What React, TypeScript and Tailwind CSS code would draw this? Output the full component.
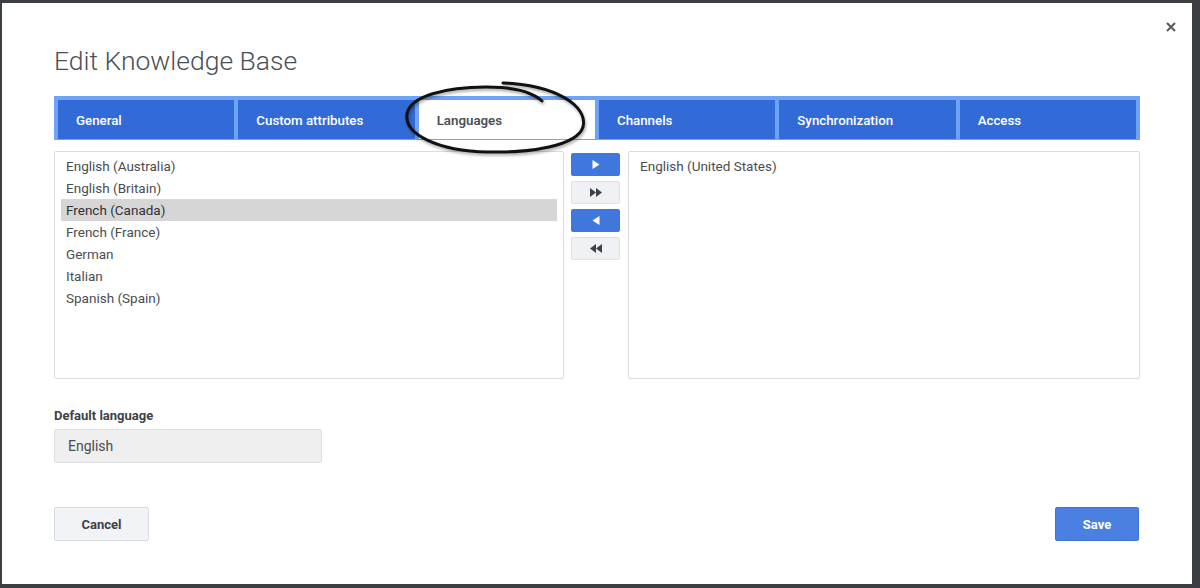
import React from "react";

const FONT = { fontFamily: "Roboto, 'Liberation Sans', sans-serif" };

const available = [
  "English (Australia)",
  "English (Britain)",
  "French (Canada)",
  "French (France)",
  "German",
  "Italian",
  "Spanish (Spain)",
];

const tabs = ["General", "Custom attributes", "Languages", "Channels", "Synchronization", "Access"];

function Tri({ dir, double, color }: { dir: "right" | "left"; double?: boolean; color: string }) {
  const one = dir === "right" ? "M0 0 L7 4.5 L0 9 Z" : "M7 0 L0 4.5 L7 9 Z";
  if (!double) {
    return (
      <svg width="8" height="9" viewBox="0 0 7 9" aria-hidden="true">
        <path d={one} fill={color} />
      </svg>
    );
  }
  return (
    <svg width="12" height="9" viewBox="0 0 12 9" aria-hidden="true">
      {dir === "right" ? (
        <>
          <path d="M0 0 L6 4.5 L0 9 Z" fill={color} />
          <path d="M6 0 L12 4.5 L6 9 Z" fill={color} />
        </>
      ) : (
        <>
          <path d="M6 0 L0 4.5 L6 9 Z" fill={color} />
          <path d="M12 0 L6 4.5 L12 9 Z" fill={color} />
        </>
      )}
    </svg>
  );
}

function MoveButton({ primary, children }: { primary?: boolean; children: React.ReactNode }) {
  return (
    <button
      className={
        primary
          ? "flex h-[23px] w-[49px] items-center justify-center rounded-[2px] bg-[#3f77dc]"
          : "flex h-[23px] w-[49px] items-center justify-center rounded-[2px] border border-[#dde1e6] bg-[#eff1f4]"
      }
    >
      {children}
    </button>
  );
}

export default function App() {
  const [selected, setSelected] = React.useState("French (Canada)");

  return (
    <div className="relative h-[588px] w-[1200px] overflow-hidden bg-[#3b3e42] pl-[2px] pt-[3px]" style={FONT}>
      <div className="relative h-[581px] w-[1190px] bg-white px-[52px] pt-[42px]">
        <button className="absolute right-[16px] top-[19px] text-[#55595e]" aria-label="Close">
          <svg width="10" height="10" viewBox="0 0 10 10">
            <path d="M1 1 L9 9 M9 1 L1 9" stroke="currentColor" strokeWidth="2" />
          </svg>
        </button>

        <h1 className="text-[26.5px] font-light leading-[32px] text-[#4a4f55]">Edit Knowledge Base</h1>

        <div className="mt-[19px] flex gap-[4px] bg-[#6fa3f7] px-[4px] pb-[1px] pt-[4px]">
          {tabs.map(tab => (
            <div
              key={tab}
              className={
                tab === "Languages"
                  ? "flex h-[39px] flex-1 items-center bg-white pl-[18px] pt-[3px] text-[13.3px] font-semibold text-[#4a4f55]"
                  : "flex h-[39px] flex-1 items-center bg-[#326bd8] pl-[18px] pt-[3px] text-[13.3px] font-medium text-white"
              }
            >
              {tab}
            </div>
          ))}
        </div>

        <div className="mt-[11px] flex h-[228px]">
          <div className="w-[510px] rounded-[2px] border border-[#d9dde2] px-[6px] pt-[3px]">
            {available.map(lang => (
              <div
                key={lang}
                onClick={() => setSelected(lang)}
                className={
                  lang === selected
                    ? "h-[22px] bg-[#d6d6d6] pl-[5px] text-[13.5px] leading-[22px] text-[#2f3236]"
                    : "h-[22px] pl-[5px] text-[13.5px] leading-[22px] text-[#4a4d51]"
                }
              >
                {lang}
              </div>
            ))}
          </div>

          <div className="ml-[7px] flex w-[49px] flex-col gap-[5px] pt-[2px]">
            <MoveButton primary>
              <Tri dir="right" color="#ffffff" />
            </MoveButton>
            <MoveButton>
              <Tri dir="right" double color="#3d4147" />
            </MoveButton>
            <MoveButton primary>
              <Tri dir="left" color="#ffffff" />
            </MoveButton>
            <MoveButton>
              <Tri dir="left" double color="#3d4147" />
            </MoveButton>
          </div>

          <div className="ml-[8px] w-[512px] rounded-[2px] border border-[#d9dde2] px-[6px] pt-[3px]">
            <div className="h-[22px] pl-[5px] text-[13.5px] leading-[22px] text-[#4a4d51]">English (United States)</div>
          </div>
        </div>

        <div className="mt-[29px] text-[13px] font-bold leading-[16px] text-[#3d4249]">Default language</div>
        <div className="mt-[5px] flex h-[34px] w-[268px] items-center rounded-[2px] border border-[#dcdee1] bg-[#efefef] pl-[13px] pt-[1px] text-[14px] text-[#4a4d51]">
          English
        </div>

        <div className="mt-[44px] flex justify-between pr-[1px]">
          <button className="h-[34px] w-[95px] rounded-[2px] border border-[#d6dbe1] bg-[#f1f3f6] pt-[2px] text-[13px] font-bold text-[#3d4249]">
            Cancel
          </button>
          <button className="h-[34px] w-[84px] rounded-[2px] border border-[#3f74d6] bg-[#4a80e1] pt-[2px] text-[13px] font-bold text-white">
            Save
          </button>
        </div>
      </div>

      {/* hand-drawn annotation around the Languages tab */}
      <svg
        className="pointer-events-none absolute left-0 top-0"
        width="1200"
        height="588"
        viewBox="0 0 1200 588"
        style={{ filter: "drop-shadow(1px 2px 1.5px rgba(0,0,0,0.35))" }}
      >
        <path
          d="M503 83 C 556 85, 588 106, 583 127 C 577 146, 530 153, 488 152 C 437 151, 404 134, 407 114 C 410 96, 446 87, 486 87 C 512 87, 532 92, 542 101"
          fill="none"
          stroke="#111"
          strokeWidth="3"
          strokeLinecap="round"
        />
      </svg>
    </div>
  );
}
